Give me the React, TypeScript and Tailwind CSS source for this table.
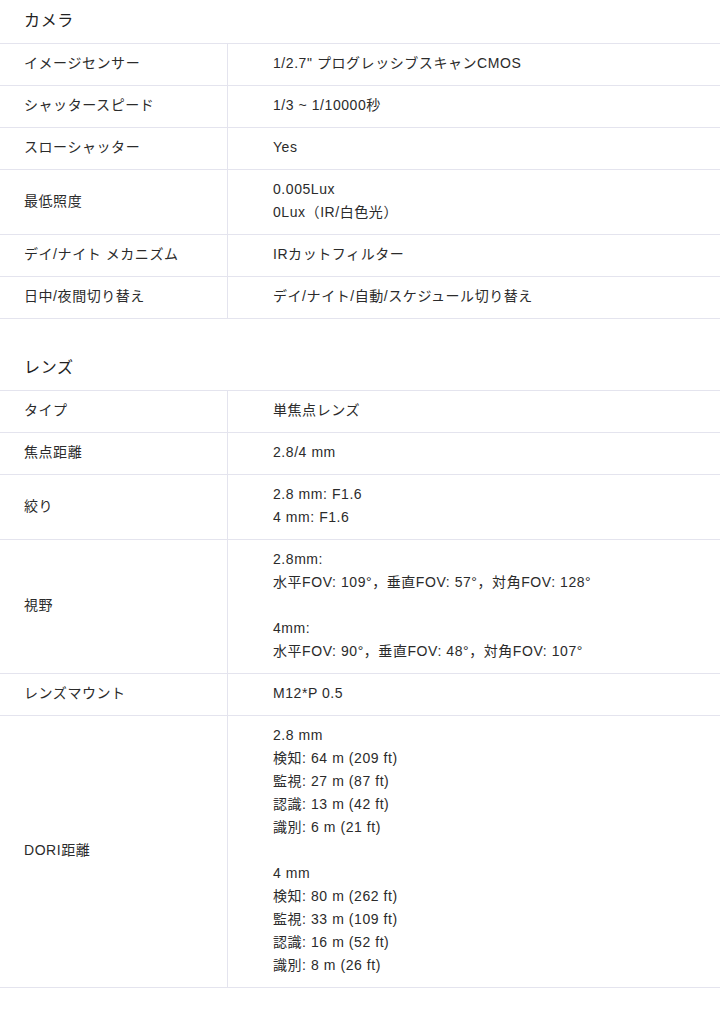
import React from "react";

type SpecRow = {
  label: string;
  lines: string[];
};

type SpecSection = {
  title: string;
  rows: SpecRow[];
};

const SECTIONS: SpecSection[] = [
  {
    title: "カメラ",
    rows: [
      { label: "イメージセンサー", lines: ["1/2.7\" プログレッシブスキャンCMOS"] },
      { label: "シャッタースピード", lines: ["1/3 ~ 1/10000秒"] },
      { label: "スローシャッター", lines: ["Yes"] },
      { label: "最低照度", lines: ["0.005Lux", "0Lux（IR/白色光）"] },
      { label: "デイ/ナイト メカニズム", lines: ["IRカットフィルター"] },
      { label: "日中/夜間切り替え", lines: ["デイ/ナイト/自動/スケジュール切り替え"] },
    ],
  },
  {
    title: "レンズ",
    rows: [
      { label: "タイプ", lines: ["単焦点レンズ"] },
      { label: "焦点距離", lines: ["2.8/4 mm"] },
      { label: "絞り", lines: ["2.8 mm: F1.6", "4 mm: F1.6"] },
      {
        label: "視野",
        lines: [
          "2.8mm:",
          "水平FOV: 109°，垂直FOV: 57°，対角FOV: 128°",
          "",
          "4mm:",
          "水平FOV: 90°，垂直FOV: 48°，対角FOV: 107°",
        ],
      },
      { label: "レンズマウント", lines: ["M12*P 0.5"] },
      {
        label: "DORI距離",
        lines: [
          "2.8 mm",
          "検知: 64 m (209 ft)",
          "監視: 27 m (87 ft)",
          "認識: 13 m (42 ft)",
          "識別: 6 m (21 ft)",
          "",
          "4 mm",
          "検知: 80 m (262 ft)",
          "監視: 33 m (109 ft)",
          "認識: 16 m (52 ft)",
          "識別: 8 m (26 ft)",
        ],
      },
    ],
  },
];

function SpecTable({ section }: { section: SpecSection }): React.JSX.Element {
  return (
    <section>
      <h2 className="h-[43px] px-6 pt-[9px] text-[16px] leading-[24px] tracking-[0.04em] text-[#222]">
        {section.title}
      </h2>
      <div className="border-b border-[#e4e4ee]">
        {section.rows.map((row) => (
          <div key={row.label} className="flex border-t border-[#e4e4ee]">
            <div className="flex w-[227px] shrink-0 items-center px-6 pt-[8px] pb-[10px]">
              {row.label}
            </div>
            <div className="flex-1 border-l border-[#e4e4ee] pt-[8px] pb-[10px] pl-[45px]">
              {row.lines.map((line, i) => (
                <div key={i} className="h-[23px]">
                  {line}
                </div>
              ))}
            </div>
          </div>
        ))}
      </div>
    </section>
  );
}

export default function App(): React.JSX.Element {
  return (
    <div
      className="min-h-[1018px] w-[720px] bg-white text-[14px] leading-[23px] tracking-[0.04em] text-[#2b2b2b]"
      style={{ fontFamily: '"Liberation Sans", "Noto Sans CJK JP", sans-serif' }}
    >
      <SpecTable section={SECTIONS[0]} />
      <div className="h-[28px]" />
      <SpecTable section={SECTIONS[1]} />
    </div>
  );
}
